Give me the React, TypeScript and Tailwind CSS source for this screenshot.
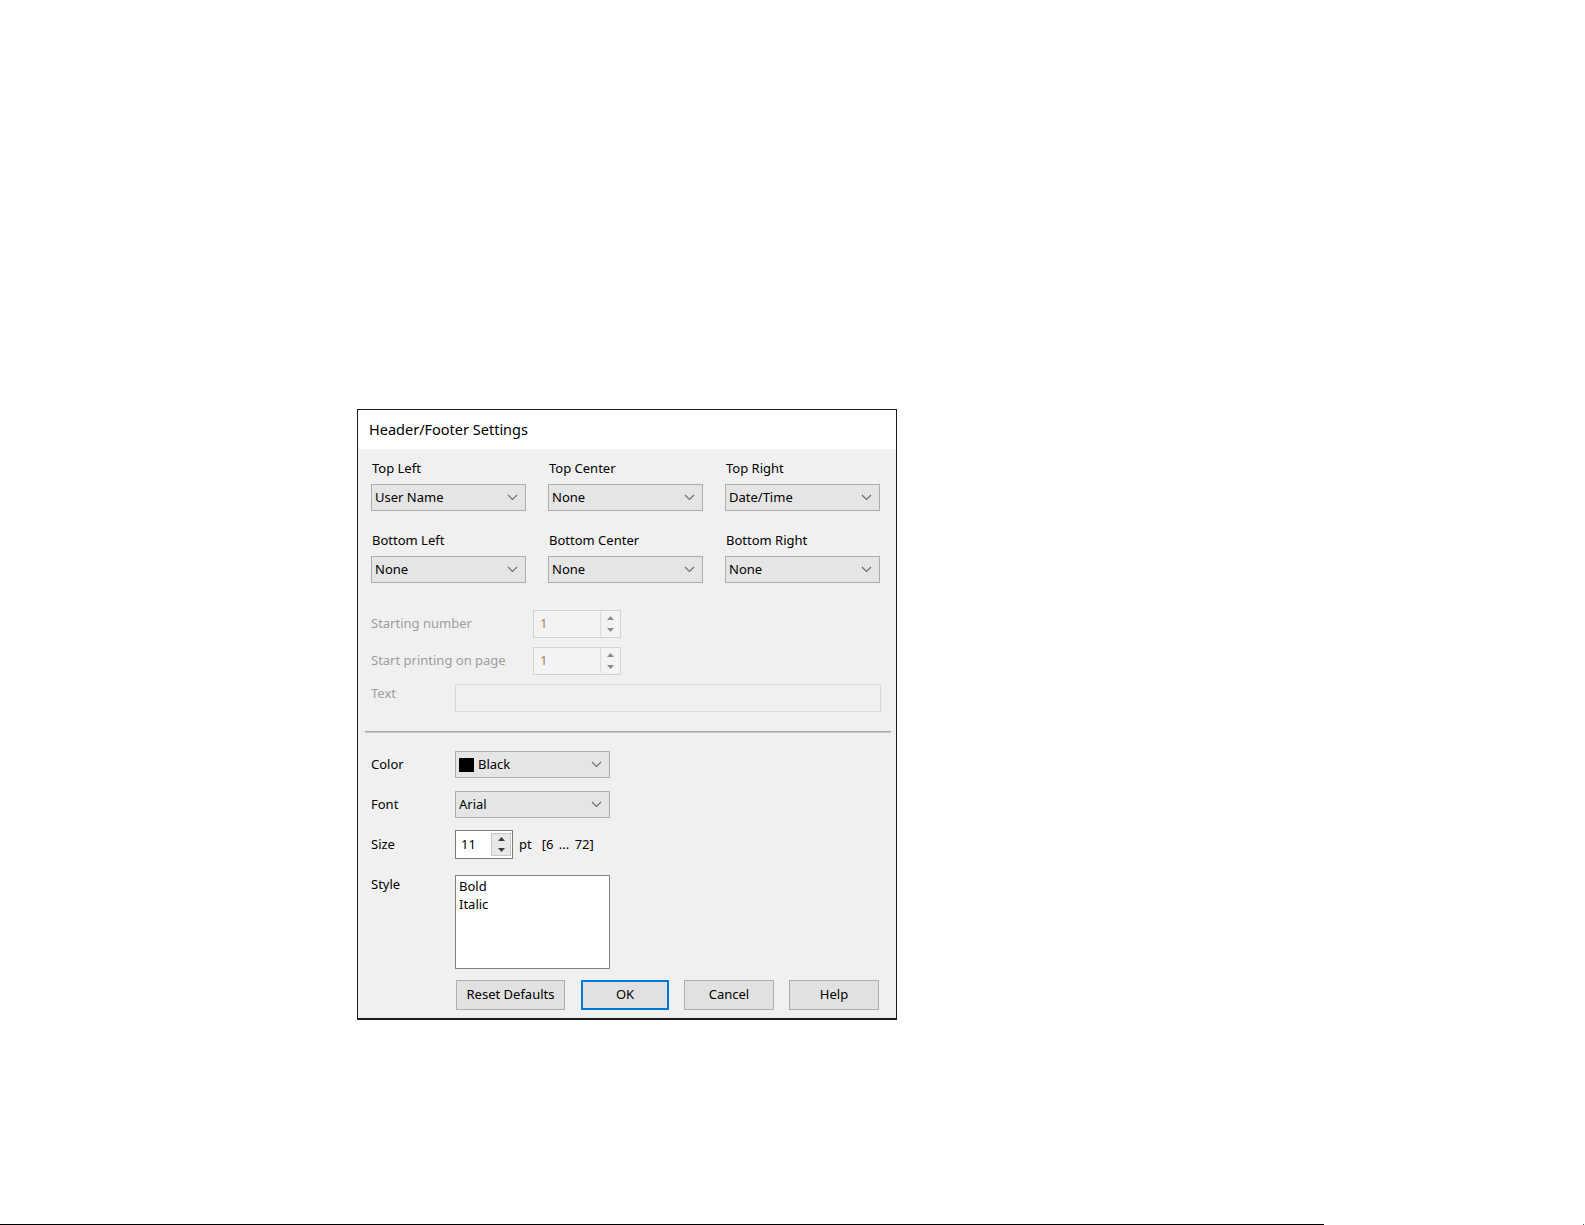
import React from 'react'

// Small down chevron used by the combo boxes
function Chevron() {
  return (
    <svg width="11" height="7" viewBox="0 0 11 7" className="shrink-0">
      <path d="M1 1l4.5 4.5L10 1" fill="none" stroke="#6a6a6a" strokeWidth="1.1" />
    </svg>
  )
}

function ComboBox({ value, swatch }: { value: string; swatch?: boolean }) {
  return (
    <div className="flex h-[27px] w-[155px] items-center border border-[#adadad] bg-[#e5e5e5] pl-[3px] pr-[7px]">
      {swatch && <span className="mr-[4px] h-[14px] w-[15px] bg-black" />}
      <span className="flex-1 leading-none">{value}</span>
      <Chevron />
    </div>
  )
}

function Arrows({ color }: { color: string }) {
  return (
    <div className="flex h-full flex-col">
      <div className="flex flex-1 items-center justify-center">
        <svg width="7" height="4" viewBox="0 0 7 4">
          <path d="M3.5 0L7 4H0z" fill={color} />
        </svg>
      </div>
      <div className="flex flex-1 items-center justify-center">
        <svg width="7" height="4" viewBox="0 0 7 4">
          <path d="M0 0h7L3.5 4z" fill={color} />
        </svg>
      </div>
    </div>
  )
}

// Greyed-out number field with up/down buttons
function DisabledSpin() {
  return (
    <div className="flex h-[28px] w-[88px] border border-[#d3d3d3] bg-[#f3f3f3]">
      <span className="flex flex-1 items-center pl-[6px] text-[#a08060]">1</span>
      <div className="my-[1px] mr-[1px] w-[19px] border-l border-[#d9d9d9]">
        <Arrows color="#8a8a8a" />
      </div>
    </div>
  )
}

function Button({ label, primary, width }: { label: string; primary?: boolean; width: string }) {
  return (
    <button
      className={
        primary
          ? `h-[30px] ${width} border-2 border-[#0078d7] bg-[#e1e1e1] text-black`
          : `h-[30px] ${width} border border-[#adadad] bg-[#e1e1e1] text-black`
      }
    >
      {label}
    </button>
  )
}

const columns = [
  [
    { label: 'Top Left', value: 'User Name' },
    { label: 'Top Center', value: 'None' },
    { label: 'Top Right', value: 'Date/Time' },
  ],
  [
    { label: 'Bottom Left', value: 'None' },
    { label: 'Bottom Center', value: 'None' },
    { label: 'Bottom Right', value: 'None' },
  ],
]

export default function App() {
  return (
    <div className="flex h-[1225px] w-[1585px] flex-col bg-white font-['Noto_Sans','Liberation_Sans',sans-serif] text-[13px] text-black">
      <div className="pl-[357px] pt-[409px]">
        <div className="flex h-[611px] w-[540px] flex-col border border-b-2 border-[#1c1c1c] bg-[#f0f0f0]">
          <div className="flex h-[39px] items-center bg-white pl-[11px] text-[14.5px]">
            Header/Footer Settings
          </div>

          <div className="flex flex-col pl-[13px] pr-[15px]">
            {/* position pickers */}
            <div className="pt-[9px]">
              {columns.map((row, i) => (
                <div key={i} className={i === 0 ? 'flex gap-[22px]' : 'mt-[19px] flex gap-[22px]'}>
                  {row.map((c) => (
                    <div key={c.label} className="flex w-[155px] flex-col">
                      <span className="h-[20px] pl-[1px] leading-[20px]">{c.label}</span>
                      <div className="mt-[6px]">
                        <ComboBox value={c.value} />
                      </div>
                    </div>
                  ))}
                </div>
              ))}
            </div>

            {/* page numbering, disabled */}
            <div className="mt-[27px] flex items-center text-[#9d9d9d]">
              <span className="w-[162px]">Starting number</span>
              <DisabledSpin />
            </div>
            <div className="mt-[9px] flex items-center text-[#9d9d9d]">
              <span className="w-[162px]">Start printing on page</span>
              <DisabledSpin />
            </div>
            <div className="mt-[9px] flex text-[#9d9d9d]">
              <span className="w-[84px] leading-[18px]">Text</span>
              <div className="h-[28px] flex-1 border border-[#d9d9d9] bg-[#f0f0f0]" />
            </div>
          </div>

          <div className="mx-[7px] mr-[5px] mt-[19px] border-t border-b border-t-[#a8a8a8] border-b-[#c8c8c8]" />

          {/* text appearance */}
          <div className="flex flex-col pl-[13px] pt-[18px]">
            <div className="flex items-center">
              <span className="w-[84px]">Color</span>
              <ComboBox value="Black" swatch />
            </div>
            <div className="mt-[13px] flex items-center">
              <span className="w-[84px]">Font</span>
              <ComboBox value="Arial" />
            </div>
            <div className="mt-[12px] flex items-center">
              <span className="w-[84px]">Size</span>
              <div className="flex h-[29px] w-[58px] border border-[#7a7a7a] bg-white">
                <span className="flex flex-1 items-center pl-[5px]">11</span>
                <div className="my-[2px] mr-[1px] w-[20px] border border-[#c8c8c8] bg-[#e8e8e8]">
                  <Arrows color="#3c3c3c" />
                </div>
              </div>
              <span className="ml-[6px]">pt</span>
              <span className="ml-[10px] whitespace-pre [word-spacing:2px]">[6 ... 72]</span>
            </div>
            <div className="mt-[16px] flex">
              <span className="w-[84px] leading-[18px]">Style</span>
              <div className="flex h-[94px] w-[155px] flex-col border border-[#828282] bg-white pl-[3px] pt-[1px] leading-[18px]">
                <span>Bold</span>
                <span>Italic</span>
              </div>
            </div>
            <div className="mt-[11px] flex pl-[85px]">
              <Button label="Reset Defaults" width="w-[109px]" />
              <div className="ml-[16px]">
                <Button label="OK" primary width="w-[88px]" />
              </div>
              <div className="ml-[15px]">
                <Button label="Cancel" width="w-[90px]" />
              </div>
              <div className="ml-[15px]">
                <Button label="Help" width="w-[90px]" />
              </div>
            </div>
          </div>
        </div>
      </div>

      <div className="flex-1" />
      <div className="flex h-px items-end">
        <div className="h-px w-[1324px] bg-black" />
        <div className="ml-[259px] h-px w-px bg-[#555]" />
      </div>
    </div>
  )
}
